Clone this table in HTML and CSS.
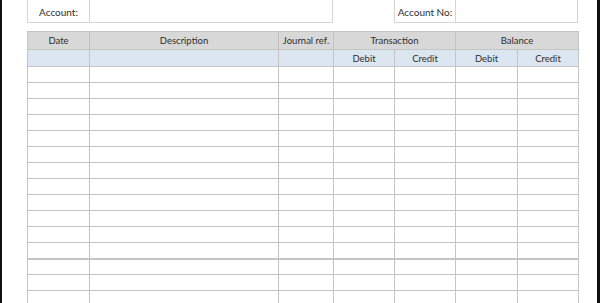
FILE: index.html
```html
<!DOCTYPE html>
<html>
<head>
<meta charset="utf-8">
<link rel="stylesheet" href="styles.css">
</head>
<body>
<div class="frame">
  <div class="top">
    <div class="box box-account">
      <div class="label label-account">Account:</div>
      <div class="value"></div>
    </div>
    <div class="box box-no">
      <div class="label label-no">Account No:</div>
      <div class="value"></div>
    </div>
  </div>
  <div class="ledger">
    <div class="h">Date</div>
    <div class="h">Description</div>
    <div class="h">Journal ref.</div>
    <div class="h span2">Transaction</div>
    <div class="h span2">Balance</div>
    <div class="s"></div>
    <div class="s"></div>
    <div class="s"></div>
    <div class="s">Debit</div>
    <div class="s">Credit</div>
    <div class="s">Debit</div>
    <div class="s">Credit</div>

    <div class="c"></div><div class="c"></div><div class="c"></div><div class="c"></div><div class="c"></div><div class="c"></div><div class="c"></div>
    <div class="c"></div><div class="c"></div><div class="c"></div><div class="c"></div><div class="c"></div><div class="c"></div><div class="c"></div>
    <div class="c"></div><div class="c"></div><div class="c"></div><div class="c"></div><div class="c"></div><div class="c"></div><div class="c"></div>
    <div class="c"></div><div class="c"></div><div class="c"></div><div class="c"></div><div class="c"></div><div class="c"></div><div class="c"></div>
    <div class="c"></div><div class="c"></div><div class="c"></div><div class="c"></div><div class="c"></div><div class="c"></div><div class="c"></div>
    <div class="c"></div><div class="c"></div><div class="c"></div><div class="c"></div><div class="c"></div><div class="c"></div><div class="c"></div>
    <div class="c"></div><div class="c"></div><div class="c"></div><div class="c"></div><div class="c"></div><div class="c"></div><div class="c"></div>
    <div class="c"></div><div class="c"></div><div class="c"></div><div class="c"></div><div class="c"></div><div class="c"></div><div class="c"></div>
    <div class="c"></div><div class="c"></div><div class="c"></div><div class="c"></div><div class="c"></div><div class="c"></div><div class="c"></div>
    <div class="c"></div><div class="c"></div><div class="c"></div><div class="c"></div><div class="c"></div><div class="c"></div><div class="c"></div>
    <div class="c"></div><div class="c"></div><div class="c"></div><div class="c"></div><div class="c"></div><div class="c"></div><div class="c"></div>
    <div class="c"></div><div class="c"></div><div class="c"></div><div class="c"></div><div class="c"></div><div class="c"></div><div class="c"></div>
    <div class="c thick"></div><div class="c thick"></div><div class="c thick"></div><div class="c thick"></div><div class="c thick"></div><div class="c thick"></div><div class="c thick"></div>
    <div class="c"></div><div class="c"></div><div class="c"></div><div class="c"></div><div class="c"></div><div class="c"></div><div class="c"></div>
    <div class="c"></div><div class="c"></div><div class="c"></div><div class="c"></div><div class="c"></div><div class="c"></div><div class="c"></div>
    <div class="c"></div><div class="c"></div><div class="c"></div><div class="c"></div><div class="c"></div><div class="c"></div><div class="c"></div>
  </div>
</div>
</body>
</html>
```

FILE: styles.css
```css
html, body {
  margin: 0;
  padding: 0;
  background: #ffffff;
}

.frame {
  width: 600px;
  height: 303px;
  overflow: hidden;
  border-left: 2px solid #111;
  border-right: 3px solid #111;
  background: #fff;
  padding-left: 25px;
  box-sizing: border-box;
  font-family: Lato, "Open Sans", sans-serif;
  color: #2e2e2e;
}

.top {
  display: flex;
  height: 23px;
  gap: 61px;
}

.box {
  display: flex;
  border: 1px solid #d4d4d4;
  border-top: none;
  box-sizing: border-box;
  height: 23px;
}

.box-account { width: 306px; }
.box-no { width: 184px; }

.label {
  display: flex;
  align-items: center;
  justify-content: center;
  font-size: 10px;
  border-right: 1px solid #d4d4d4;
  padding-top: 1px;
  box-sizing: border-box;
}

.label-account { width: 62px; }
.label-no { width: 61px; }

.value { flex: 1; }

.ledger {
  margin-top: 8px;
  width: 552px;
  display: grid;
  grid-template-columns: 61px 188px 54px 60px 60px 61px 60px;
  grid-template-rows: 17px 16px repeat(16, 15px);
  gap: 1px;
  padding: 1px;
  background: #c4c4c4;
  box-sizing: border-box;
}

.h {
  background: #d8d8d8;
  display: flex;
  align-items: center;
  justify-content: center;
  font-size: 9.5px;
}

.span2 { grid-column: span 2; }

.s {
  background: #dce6f1;
  display: flex;
  align-items: center;
  justify-content: center;
  font-size: 9.5px;
}

.c {
  background: #fff;
  box-sizing: border-box;
}

.c.thick {
  border-top: 1px solid #c4c4c4;
}
```
